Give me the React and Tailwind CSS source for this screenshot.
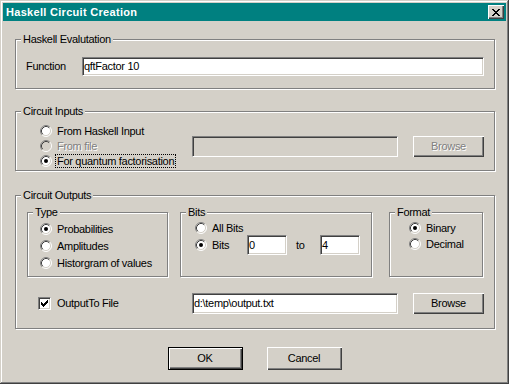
const sunken =
    'border border-t-[#808080] border-l-[#808080] border-r-white border-b-white shadow-[inset_1px_1px_0_#404040,inset_-1px_-1px_0_#d4d0c8]';
const raised =
    'shadow-[inset_1px_1px_0_#fff,inset_-1px_-1px_0_#404040,inset_-2px_-2px_0_#808080]';
const disabledText = 'text-[#808080] [text-shadow:1px_1px_0_#fff]';

const Radio = ({ checked, disabled }) => (
    <svg width="12" height="12" viewBox="0 0 12 12" className="shrink-0">
        <circle cx="6" cy="6" r="5" fill={disabled ? '#d4d0c8' : '#fff'} />
        <path d="M2.11 9.89 A5.5 5.5 0 0 1 9.89 2.11" fill="none" stroke="#808080" />
        <path d="M9.89 2.11 A5.5 5.5 0 0 1 2.11 9.89" fill="none" stroke="#fff" />
        <path d="M2.82 9.18 A4.5 4.5 0 0 1 9.18 2.82" fill="none" stroke="#404040" />
        <path d="M9.18 2.82 A4.5 4.5 0 0 1 2.82 9.18" fill="none" stroke="#d4d0c8" />
        {checked && <circle cx="6" cy="6" r="2" fill="#000" />}
    </svg>
);

const Option = ({ label, checked, disabled, focused, className = '' }) => (
    <div className={`flex items-center ${className}`}>
        <Radio checked={checked} disabled={disabled} />
        <span
            className={`ml-[3px] px-[1px] leading-[12px] border border-dotted whitespace-nowrap ${
                focused ? 'border-black' : 'border-transparent'
            } ${disabled ? disabledText : ''}`}
        >
            {label}
        </span>
    </div>
);

const Field = ({ value, disabled, className = '' }) => (
    <div className={`flex items-center pl-[1px] ${sunken} ${disabled ? 'bg-[#d4d0c8]' : 'bg-white'} ${className}`}>
        {value}
    </div>
);

const Button = ({ children, disabled, isDefault, className = '' }) => (
    <div
        className={`flex items-center justify-center ${raised} ${isDefault ? 'border border-black' : ''} ${
            disabled ? disabledText : ''
        } ${className}`}
    >
        {children}
    </div>
);

const Group = ({ title, className = '', children }) => (
    <div className={`relative border border-[#808080] shadow-[inset_1px_1px_0_#fff,1px_1px_0_#fff] ${className}`}>
        <span className="absolute left-[5px] -top-[7px] px-[2px] leading-[13px] bg-[#d4d0c8] whitespace-nowrap">
            {title}
        </span>
        {children}
    </div>
);

const App = () => {
    return (
        <div className="w-[509px] h-[384px] bg-[#d4d0c8] flex flex-col font-['Liberation_Sans',Arial,sans-serif] text-[11px] tracking-[-0.3px] text-black shadow-[inset_-1px_-1px_0_#404040,inset_1px_1px_0_#d4d0c8,inset_-2px_-2px_0_#808080,inset_2px_2px_0_#fff]">
            {/* title bar */}
            <div className="mt-[3px] mx-[3px] h-[18px] bg-[#008080] flex items-center pl-[3px] pr-[2px]">
                <span className="font-bold text-white tracking-[0.3px]">Haskell Circuit Creation</span>
                <Button className="ml-auto w-[16px] h-[14px] bg-[#d4d0c8]">
                    <svg width="8" height="7" viewBox="0 0 8 7" shapeRendering="crispEdges">
                        <path
                            fill="#000"
                            d="M0 0h2v1H0z M6 0h2v1H6z M1 1h2v1H1z M5 1h2v1H5z M2 2h4v1H2z M3 3h2v1H3z M2 4h4v1H2z M1 5h2v1H1z M5 5h2v1H5z M0 6h2v1H0z M6 6h2v1H6z"
                        />
                    </svg>
                </Button>
            </div>

            <div className="pl-[15px] pr-[14px] flex flex-col">
                <Group title="Haskell Evalutation" className="mt-[18px] h-[50px]">
                    <div className="flex items-center pt-[17px] pl-[10px]">
                        <span className="w-[56px]">Function</span>
                        <Field value="qftFactor 10" className="w-[402px] h-[19px]" />
                    </div>
                </Group>

                <Group title="Circuit Inputs" className="mt-[22px] h-[60px]">
                    <div className="flex items-start">
                        <div className="w-[176px] pl-[24px] pt-[11px] flex flex-col">
                            <Option label="From Haskell Input" className="h-[15px]" />
                            <Option label="From file" disabled className="h-[15px]" />
                            <Option label="For quantum factorisation" checked focused className="h-[15px]" />
                        </div>
                        <div className="mt-[24px] flex items-center">
                            <Field disabled className="w-[206px] h-[21px]" />
                            <Button disabled className="ml-[15px] w-[71px] h-[21px]">
                                Browse
                            </Button>
                        </div>
                    </div>
                </Group>

                <Group title="Circuit Outputs" className="mt-[24px] h-[134px]">
                    <div className="flex mt-[16px] pl-[11px]">
                        <Group title="Type" className="w-[141px] h-[65px]">
                            <div className="pt-[7px] pl-[12px] flex flex-col">
                                <Option label="Probabilities" checked className="h-[17px]" />
                                <Option label="Amplitudes" className="h-[17px]" />
                                <Option label="Historgram of values" className="h-[17px]" />
                            </div>
                        </Group>
                        <Group title="Bits" className="ml-[12px] w-[192px] h-[65px]">
                            <div className="pt-[7px] pl-[14px] flex flex-col">
                                <Option label="All Bits" className="h-[15px]" />
                                <div className="h-[20px] flex items-center">
                                    <Radio checked />
                                    <span className="ml-[3px] w-[37px] pl-[2px]">Bits</span>
                                    <Field value="0" className="w-[40px] h-[20px]" />
                                    <span className="ml-[9px] w-[24px]">to</span>
                                    <Field value="4" className="w-[40px] h-[20px]" />
                                </div>
                            </div>
                        </Group>
                        <Group title="Format" className="ml-[17px] w-[94px] h-[65px]">
                            <div className="pt-[7px] pl-[19px] flex flex-col">
                                <Option label="Binary" checked className="h-[16px]" />
                                <Option label="Decimal" className="h-[16px]" />
                            </div>
                        </Group>
                    </div>

                    <div className="mt-[16px] h-[21px] pl-[22px] flex items-center">
                        <div className="w-[154px] flex items-center">
                            <div className={`w-[13px] h-[13px] bg-white flex items-center justify-center ${sunken}`}>
                                <svg width="7" height="7" viewBox="0 0 7 7" shapeRendering="crispEdges">
                                    <path
                                        fill="#000"
                                        d="M6 0h1v1H6z M5 1h2v1H5z M0 2h1v1H0z M4 2h3v1H4z M0 3h2v1H0z M3 3h3v1H3z M0 4h5v1H0z M1 5h3v1H1z M2 6h1v1H2z"
                                    />
                                </svg>
                            </div>
                            <span className="ml-[6px]">OutputTo File</span>
                        </div>
                        <Field value="d:\temp\output.txt" className="w-[206px] h-[21px]" />
                        <Button className="ml-[15px] w-[71px] h-[21px]">Browse</Button>
                    </div>
                </Group>
            </div>

            <div className="mt-[18px] flex justify-center gap-[24px]">
                <Button isDefault className="w-[75px] h-[23px]">
                    OK
                </Button>
                <Button className="w-[75px] h-[23px]">Cancel</Button>
            </div>
        </div>
    );
};

export default App;
